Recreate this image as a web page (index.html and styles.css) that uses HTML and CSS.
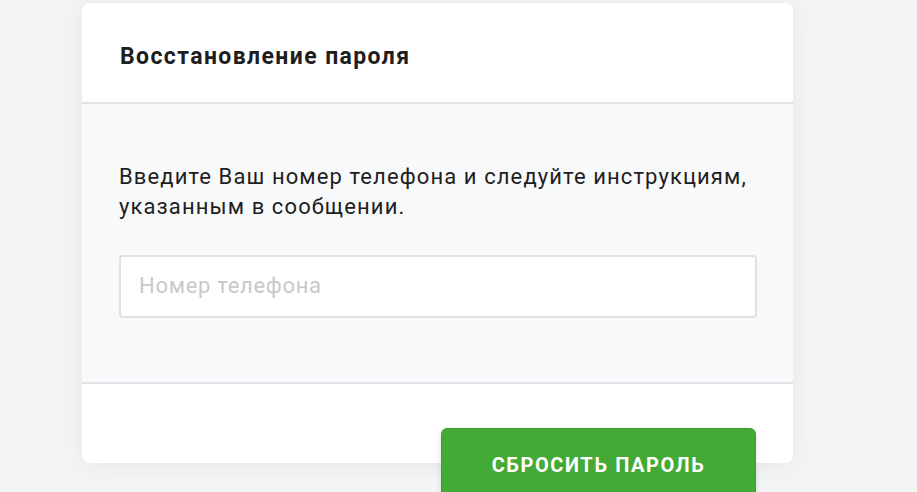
FILE: index.html
```html
<!DOCTYPE html>
<html lang="ru">
<head>
<meta charset="utf-8">
<title>Восстановление пароля</title>
<link rel="stylesheet" href="styles.css">
</head>
<body>
<div class="card">
  <div class="card-header">
    <h1 class="title">Восстановление пароля</h1>
  </div>
  <div class="card-body">
    <p class="hint">Введите Ваш номер телефона и следуйте инструкциям, указанным в сообщении.</p>
    <input class="phone" type="text" placeholder="Номер телефона">
  </div>
  <div class="card-footer">
    <button class="submit" type="button">СБРОСИТЬ ПАРОЛЬ</button>
  </div>
</div>
</body>
</html>
```
FILE: styles.css
```css
html, body {
  margin: 0;
  padding: 0;
  height: 100%;
  overflow: hidden;
}
body {
  background: #f3f4f6;
  font-family: Roboto, "Liberation Sans", Arial, sans-serif;
  color: #212121;
}
.card {
  margin: 3px 0 0 82px;
  width: 711px;
  background: #fff;
  border-radius: 8px;
  box-shadow: 0 2px 24px rgba(0, 0, 0, 0.06);
}
.card-header {
  padding: 0 38px;
  display: flex;
  align-items: center;
  border-bottom: 2px solid #e1e2e5;
  box-sizing: border-box;
  height: 101px;
}
.title {
  margin: 8px 0 0;
  font-size: 23px;
  font-weight: 700;
  letter-spacing: 1.4px;
  color: #1e1e1e;
}
.card-body {
  background: #f8f9fa;
  padding: 58px 36px 64px 37px;
  border-bottom: 2px solid #e1e2e5;
}
.hint {
  margin: 0 0 33px;
  font-size: 22px;
  line-height: 30px;
  letter-spacing: 1.1px;
  color: #1e1e1e;
}
.phone {
  display: block;
  width: 100%;
  height: 63px;
  box-sizing: border-box;
  border: 2px solid #e0e1e3;
  border-radius: 4px;
  background: #fff;
  padding: 0 18px 3px;
  font-family: inherit;
  font-size: 22px;
  letter-spacing: 0.7px;
  color: #1e1e1e;
  outline: none;
}
.phone::placeholder {
  color: #c9c9c9;
}
.card-footer {
  height: 79px;
  display: flex;
  justify-content: flex-end;
  padding-right: 37px;
}
.submit {
  margin-top: 44px;
  width: 315px;
  height: 74px;
  flex: none;
  background: #43ab35;
  border: 1px solid #3c9c30;
  border-radius: 6px;
  color: #fff;
  font-family: inherit;
  font-size: 20px;
  font-weight: 700;
  letter-spacing: 1.6px;
  box-shadow: 0 2px 6px rgba(0, 0, 0, 0.12);
}
```
